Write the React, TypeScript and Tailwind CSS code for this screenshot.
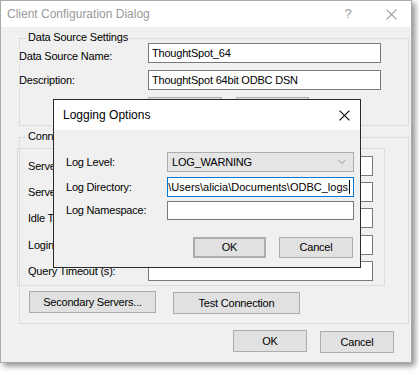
import { ChevronDown } from "lucide-react";

function Btn({ label, className = "" }: { label: string; className?: string }) {
  return (
    <div
      className={`flex items-center justify-center overflow-hidden whitespace-nowrap bg-[#e1e1e1] border border-[#adadad] text-[11px] leading-[13px] text-black ${className}`}
    >
      {label}
    </div>
  );
}

function Field({ value = "", className = "" }: { value?: string; className?: string }) {
  return (
    <div
      className={`flex items-center overflow-hidden whitespace-nowrap bg-white border border-[#7a7a7a] pl-[3px] text-[11px] leading-[13px] text-black ${className}`}
    >
      {value}
    </div>
  );
}

function CloseX({ color, size }: { color: string; size: number }) {
  return (
    <svg width={size} height={size} viewBox="0 0 10 10">
      <path d="M0.5 0.5 L9.5 9.5 M9.5 0.5 L0.5 9.5" stroke={color} strokeWidth="1" />
    </svg>
  );
}

const connRows = [
  "Server:",
  "Server Port:",
  "Idle Timeout (s):",
  "Login Timeout (s):",
  "Query Timeout (s):",
];

export default function App() {
  return (
    <div className="relative w-[419px] h-[373px] overflow-hidden bg-white font-['Liberation_Sans',Arial,sans-serif] tracking-[-0.2px]">
      {/* Main dialog */}
      <div className="w-[412px] h-[363px] border border-[#aaaaaa] bg-[#f0f0f0] shadow-[3px_3px_6px_rgba(0,0,0,0.45)] flex flex-col">
        <div className="h-[26px] bg-white flex items-center pl-[6px] text-[12px] text-[#999999] tracking-normal">
          <span className="flex-1">Client Configuration Dialog</span>
          <span className="w-[12px] text-center text-[13px]">?</span>
          <span className="w-[32px]" />
          <span className="flex items-center">
            <CloseX color="#999999" size={11} />
          </span>
          <span className="w-[14px]" />
        </div>

        {/* Data Source Settings */}
        <div className="relative mt-[11px] ml-[18px] w-[390px] h-[88px] border border-[#dcdcdc] flex flex-col">
          <span className="absolute left-[6px] top-[-8px] px-[2px] bg-[#f0f0f0] text-[11px] leading-[13px] text-black">
            Data Source Settings
          </span>
          <div className="mt-[4px] flex items-start">
            <span className="-ml-px mt-[7px] w-[129px] h-[13px] bg-[#f0f0f0] text-[11px] leading-[13px] text-black">
              Data Source Name:
            </span>
            <Field value="ThoughtSpot_64" className="w-[233px] h-[20px]" />
          </div>
          <div className="mt-[7px] flex items-start">
            <span className="-ml-px mt-[4px] w-[129px] h-[13px] bg-[#f0f0f0] text-[11px] leading-[13px] text-black">
              Description:
            </span>
            <Field value="ThoughtSpot 64bit ODBC DSN" className="w-[233px] h-[20px]" />
          </div>
          <div className="mt-[7px] flex ml-[128px]">
            <Btn label="Advanced..." className="w-[74px] h-[21px]" />
            <Btn label="Logging..." className="ml-[14px] w-[73px] h-[21px]" />
          </div>
        </div>

        {/* Connection Settings */}
        <div className="relative mt-[11px] ml-[18px] w-[390px] h-[187px] border border-[#dcdcdc] flex flex-col">
          <span className="absolute left-[6px] top-[-8px] px-[2px] bg-[#f0f0f0] text-[11px] leading-[13px] text-black">
            Connection Settings
          </span>
          <div className="mt-[10px] -ml-[3px] w-[368px] h-[138px] border border-[#dcdcdc] flex flex-col pt-[7px]">
            {connRows.map((label, i) => (
              <div key={label} className={`flex items-center ${i === 0 ? "" : i === 3 ? "mt-[7px]" : "mt-[6px]"}`}>
                <span className="ml-[10px] w-[120px] text-[11px] leading-[13px] text-black">{label}</span>
                <Field className="w-[225px] h-[20px]" />
              </div>
            ))}
          </div>
          <div className="mt-[5px] ml-[9px] flex items-start">
            <Btn label="Secondary Servers..." className="w-[127px] h-[22px]" />
            <Btn label="Test Connection" className="mt-px ml-[17px] w-[127px] h-[22px]" />
          </div>
        </div>

        <div className="mt-[6px] ml-[232px] flex items-start">
          <Btn label="OK" className="w-[74px] h-[22px]" />
          <Btn label="Cancel" className="mt-px ml-[13px] w-[74px] h-[22px]" />
        </div>
      </div>

      {/* Logging Options dialog (over the main one) */}
      <div className="absolute left-[53px] top-[99px] w-[308px] h-[169px] border border-[#2b2b2b] bg-[#f0f0f0] flex flex-col">
        <div className="h-[30px] bg-white flex items-center pl-[9px] pr-[10px] text-[12px] text-black tracking-normal">
          <span className="flex-1">Logging Options</span>
          <CloseX color="#000000" size={11} />
        </div>
        <div className="mt-[22px] flex items-center">
          <span className="ml-[12px] w-[101px] text-[11px] leading-[13px] text-black">Log Level:</span>
          <div className="w-[187px] h-[20px] bg-[#e5e5e5] border border-[#adadad] flex items-center pl-[4px] pr-[5px] text-[11px] text-black">
            <span className="flex-1">LOG_WARNING</span>
            <ChevronDown size={12} strokeWidth={1.2} color="#606060" />
          </div>
        </div>
        <div className="mt-[5px] flex items-center">
          <span className="ml-[12px] w-[101px] text-[11px] leading-[13px] text-black">Log Directory:</span>
          <div className="w-[187px] h-[20px] bg-white border border-[#0078d7] flex items-center justify-end overflow-hidden whitespace-nowrap pr-[3px] text-[11px] text-black tracking-normal">
            <span>\Users\alicia\Documents\ODBC_logs</span>
            <span className="ml-px w-px h-[14px] bg-black shrink-0" />
          </div>
        </div>
        <div className="mt-[4px] flex items-center">
          <span className="ml-[12px] w-[101px] text-[11px] leading-[13px] text-black">Log Namespace:</span>
          <Field className="w-[187px] h-[19px]" />
        </div>
        <div className="mt-[17px] ml-[139px] flex">
          <Btn label="OK" className="w-[73px] h-[21px] border-2 border-[#0078d7]" />
          <Btn label="Cancel" className="ml-[13px] w-[74px] h-[21px]" />
        </div>
      </div>
    </div>
  );
}
